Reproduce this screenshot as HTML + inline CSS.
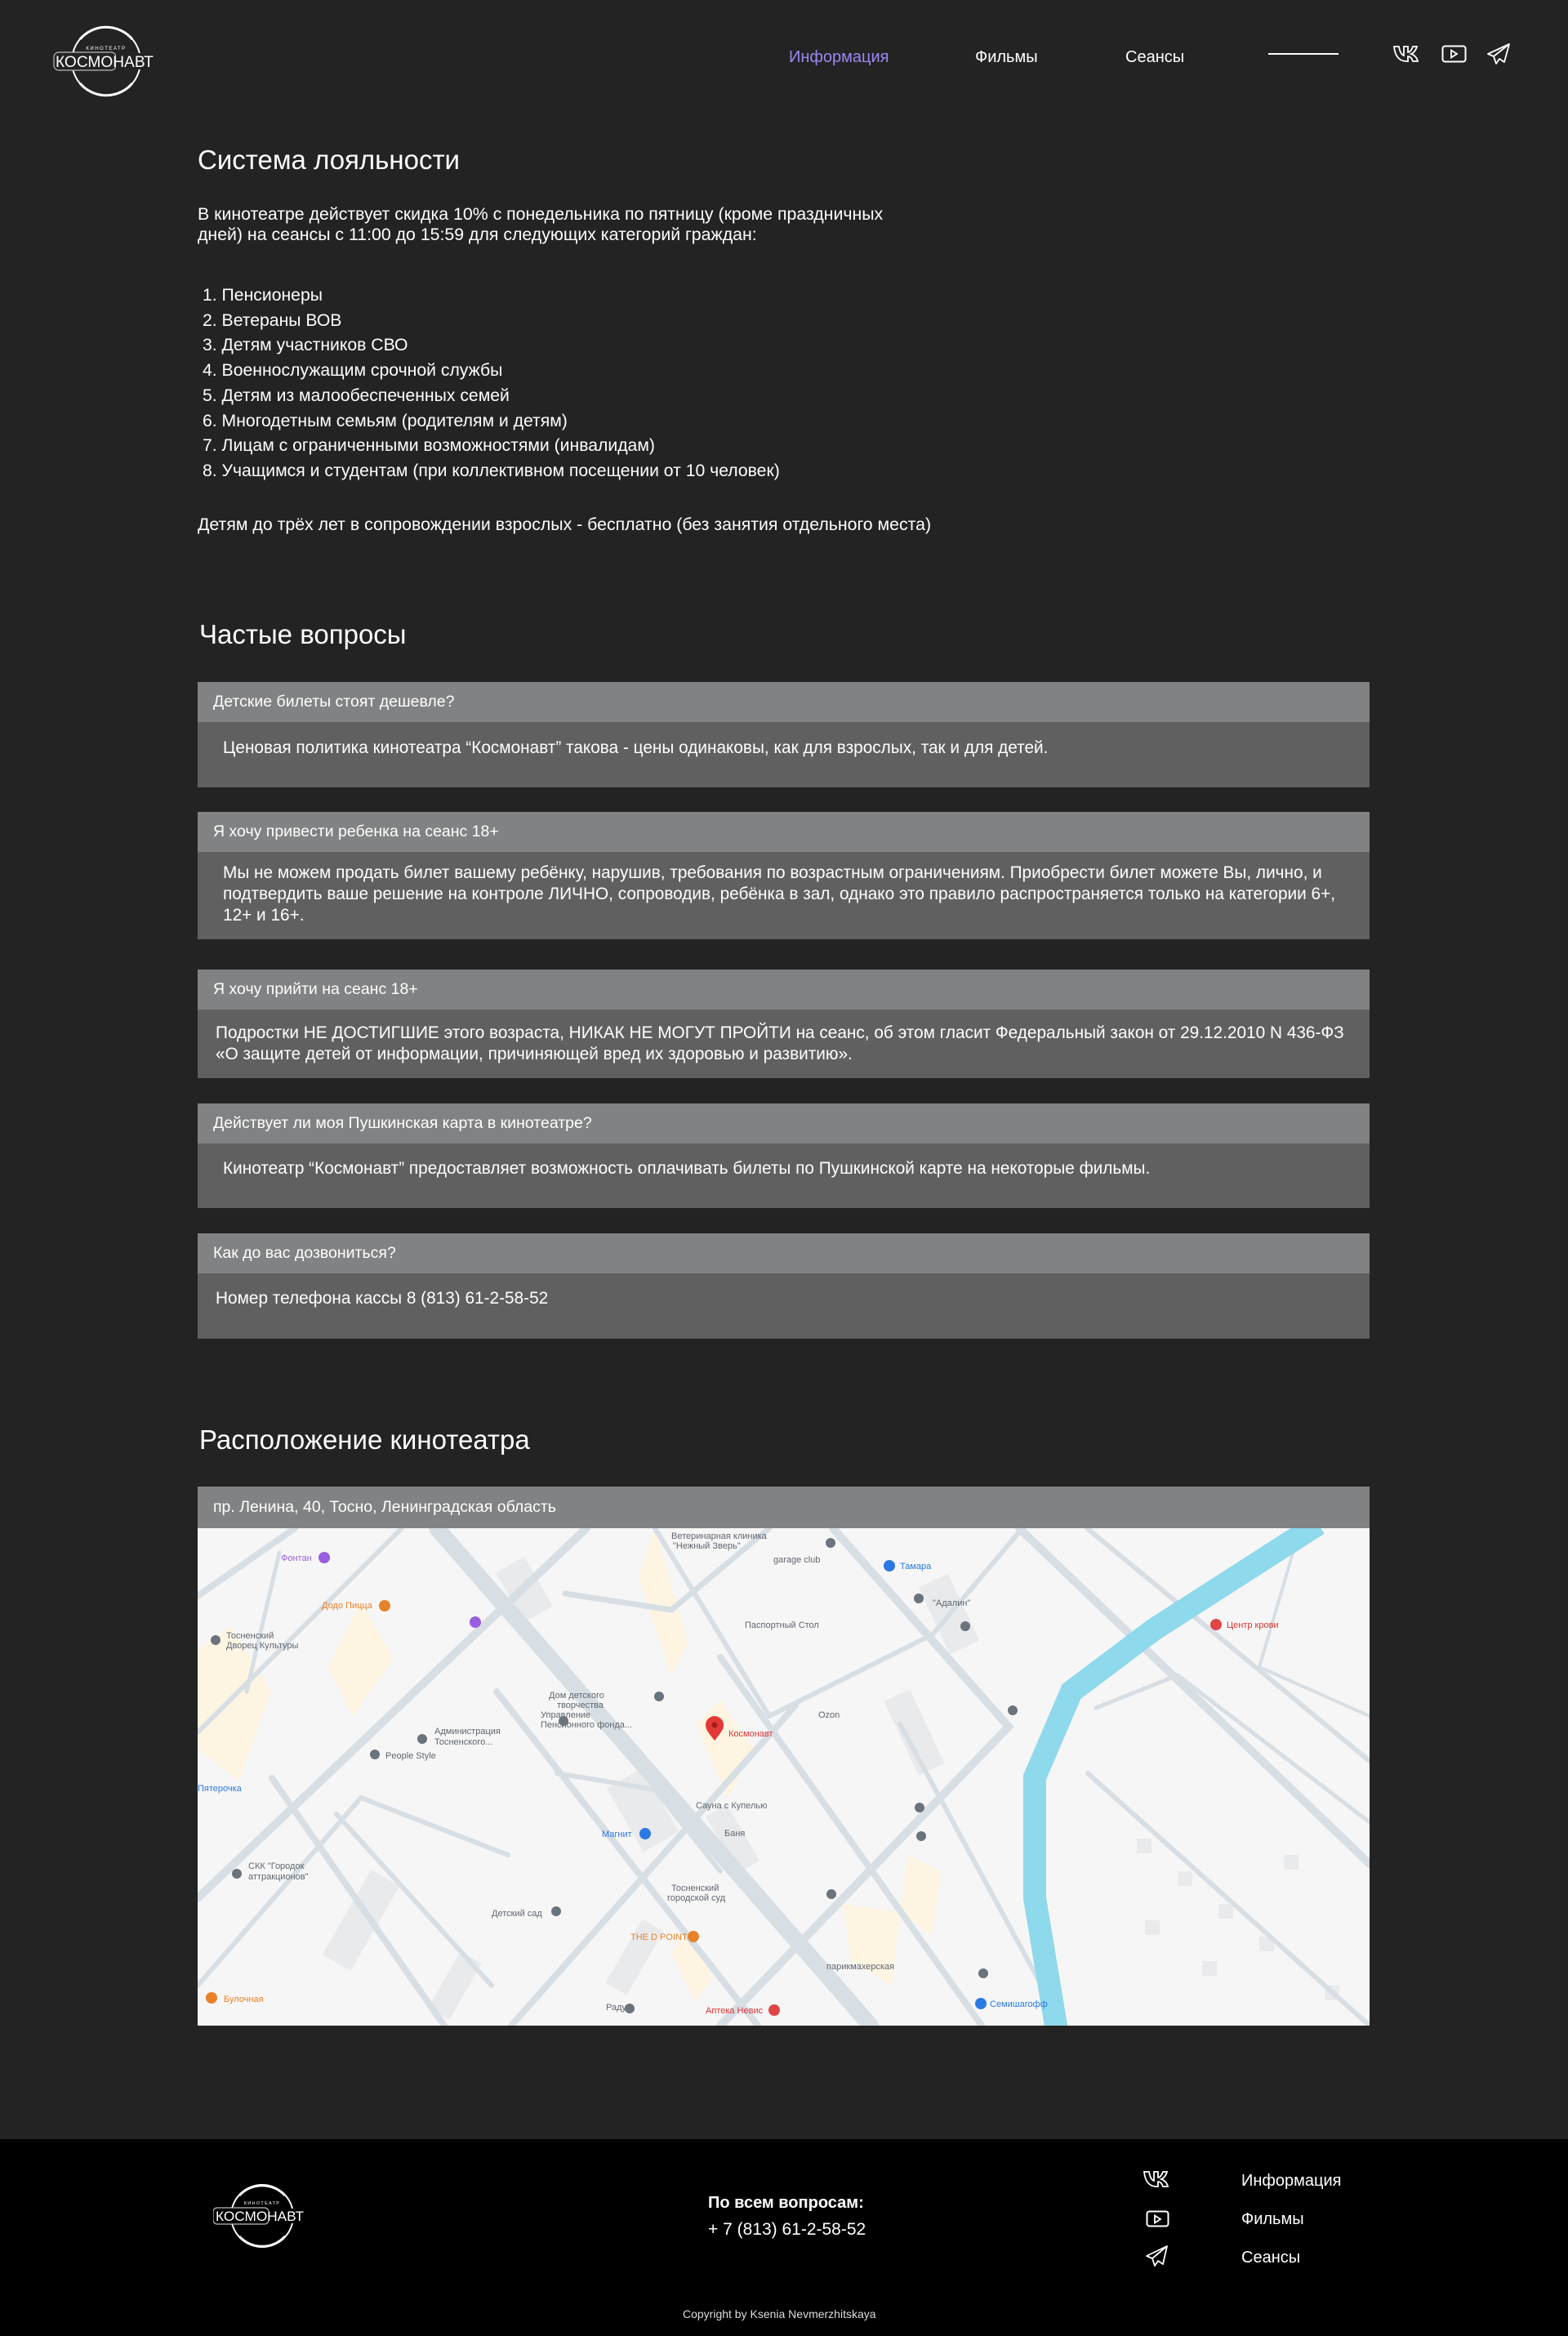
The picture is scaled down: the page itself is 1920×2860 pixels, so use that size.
<!DOCTYPE html>
<html><head><meta charset="utf-8">
<style>
*{margin:0;padding:0;box-sizing:border-box}
body{width:1920px;height:2860px;background:#232323;font-family:"Liberation Sans","DejaVu Sans",sans-serif;color:#fff;position:relative;overflow:hidden}
.a{position:absolute;white-space:nowrap}
.nav{font-size:20px;top:59px}
h2{position:absolute;font-weight:normal;font-size:33px;left:242px}
.p{font-size:21.3px;line-height:25px;left:242px}
.li{font-size:21.2px;left:248px;line-height:30.7px}
.box{position:absolute;left:242px;width:1435px;background:#606060}
.box .h{background:#818283;height:49px;font-size:19.5px;line-height:49px;padding-left:19px}
.box .b{font-size:20.8px;line-height:26px}
.foot{position:absolute;left:0;top:2619px;width:1920px;height:241px;background:#000}
</style></head><body>

<svg class="a" style="left:40px;top:20px" width="180" height="110" viewBox="0 0 180 110">
<circle cx="90" cy="55" r="42" fill="none" stroke="#fff" stroke-width="2"/>
<path d="M58 28 A42 42 0 0 1 122 28" fill="none" stroke="#fff" stroke-width="3"/>
<path d="M58 82 A42 42 0 0 0 122 82" fill="none" stroke="#fff" stroke-width="3"/>
<rect x="26" y="44" width="76" height="22" rx="6" fill="#232323" stroke="#bbb" stroke-width="1.2"/>
<rect x="102" y="45" width="48" height="20" fill="#232323"/>
<text x="90" y="41" font-size="6" fill="#fff" text-anchor="middle" letter-spacing="1.5" font-family="Liberation Sans">КИНОТЕАТР</text>
<text x="88" y="62" font-size="19" fill="#fff" text-anchor="middle" font-family="Liberation Sans" textLength="120" lengthAdjust="spacingAndGlyphs">КОСМОНАВТ</text>
</svg>

<div class="a nav" style="left:966px;color:#9d86f2">Информация</div>
<div class="a nav" style="left:1194px">Фильмы</div>
<div class="a nav" style="left:1378px">Сеансы</div>
<div class="a" style="left:1553px;top:65px;width:86px;height:2px;background:#fff"></div>

<svg class="a" style="left:1705px;top:55px" width="36" height="22" viewBox="0 0 36 22"><path d="M2 2h6c1 6 3 10 6 11V2h5v7c2 0 5-3 6-7h5c-1 4-4 8-7 9 3 1 7 4 8 9h-6c-1-3-3-6-6-6v6h-2C8 20 3 13 2 2z" fill="none" stroke="#fff" stroke-width="1.8"/></svg>
<svg class="a" style="left:1765px;top:55px" width="31" height="22" viewBox="0 0 31 22"><rect x="1.5" y="1.5" width="28" height="19" rx="3" fill="none" stroke="#fff" stroke-width="2"/><path d="M12 6.5v9l7-4.5z" fill="none" stroke="#fff" stroke-width="1.8"/></svg>
<svg class="a" style="left:1820px;top:52px" width="30" height="28" viewBox="0 0 30 28"><path d="M28 2L2 14l7 3 3 9 4-6 6 4zM9 17l19-15M12 26l4-6" fill="none" stroke="#fff" stroke-width="1.8" stroke-linejoin="round"/></svg>

<h2 style="top:177px">Система лояльности</h2>
<div class="a p" style="top:250px">В кинотеатре действует скидка 10% с понедельника по пятницу (кроме праздничных<br>дней) на сеансы с 11:00 до 15:59 для следующих категорий граждан:</div>
<div class="a li" style="top:347px">1. Пенсионеры<br>2. Ветераны ВОВ<br>3. Детям участников СВО<br>4. Военнослужащим срочной службы<br>5. Детям из малообеспеченных семей<br>6. Многодетным семьям (родителям и детям)<br>7. Лицам с ограниченными возможностями (инвалидам)<br>8. Учащимся и студентам (при коллективном посещении от 10 человек)</div>
<div class="a p" style="top:630px">Детям до трёх лет в сопровождении взрослых - бесплатно (без занятия отдельного места)</div>

<h2 style="top:758px;left:244px">Частые вопросы</h2>

<div class="box" style="top:835px;height:129px"><div class="h">Детские билеты стоят дешевле?</div><div class="b" style="padding:19px 0 0 31px">Ценовая политика кинотеатра “Космонавт” такова - цены одинаковы, как для взрослых, так и для детей.</div></div>
<div class="box" style="top:994px;height:156px"><div class="h">Я хочу привести ребенка на сеанс 18+</div><div class="b" style="padding:13px 0 0 31px">Мы не можем продать билет вашему ребёнку, нарушив, требования по возрастным ограничениям. Приобрести билет можете Вы, лично, и<br>подтвердить ваше решение на контроле ЛИЧНО, сопроводив, ребёнка в зал, однако это правило распространяется только на категории 6+,<br>12+ и 16+.</div></div>
<div class="box" style="top:1187px;height:133px"><div class="h">Я хочу прийти на сеанс 18+</div><div class="b" style="padding:16px 0 0 22px">Подростки НЕ ДОСТИГШИЕ этого возраста, НИКАК НЕ МОГУТ ПРОЙТИ на сеанс, об этом гласит Федеральный закон от 29.12.2010 N 436-ФЗ<br>«О защите детей от информации, причиняющей вред их здоровью и развитию».</div></div>
<div class="box" style="top:1351px;height:128px"><div class="h">Действует ли моя Пушкинская карта в кинотеатре?</div><div class="b" style="padding:18px 0 0 31px">Кинотеатр “Космонавт” предоставляет возможность оплачивать билеты по Пушкинской карте на некоторые фильмы.</div></div>
<div class="box" style="top:1510px;height:129px"><div class="h">Как до вас дозвониться?</div><div class="b" style="padding:18px 0 0 22px">Номер телефона кассы 8 (813) 61-2-58-52</div></div>

<h2 style="top:1744px;left:244px">Расположение кинотеатра</h2>
<div class="box" style="top:1820px;height:51px;background:#818283"><div class="h" style="height:51px;line-height:51px">пр. Ленина, 40, Тосно, Ленинградская область</div></div>

<svg class="a" style="left:242px;top:1871px" width="1435" height="609" viewBox="0 0 1435 609" font-family="Liberation Sans" font-size="11">
<rect width="1435" height="609" fill="#f7f6f6"/>
<g fill="#e9eaec">
<rect x="380" y="40" width="40" height="70" transform="rotate(-30 400 75)"/>
<rect x="520" y="300" width="50" height="90" transform="rotate(-30 545 345)"/>
<rect x="180" y="420" width="40" height="120" transform="rotate(30 200 480)"/>
<rect x="860" y="200" width="35" height="100" transform="rotate(-25 877 250)"/>
<rect x="900" y="60" width="40" height="90" transform="rotate(-25 920 105)"/>
<rect x="300" y="520" width="30" height="80" transform="rotate(30 315 560)"/>
<rect x="520" y="480" width="30" height="90" transform="rotate(30 535 525)"/>
<rect x="640" y="340" width="30" height="80" transform="rotate(-30 655 380)"/>
<rect x="1150" y="380" width="18" height="18"/><rect x="1200" y="420" width="18" height="18"/><rect x="1250" y="460" width="18" height="18"/><rect x="1300" y="500" width="18" height="18"/><rect x="1230" y="530" width="18" height="18"/><rect x="1330" y="400" width="18" height="18"/><rect x="1160" y="480" width="18" height="18"/><rect x="1380" y="560" width="18" height="18"/>
</g>
<g fill="#fdf5e2">
<path d="M200 90l40 70-50 70-30-60z"/>
<path d="M0 150l40-30 50 80-40 110-50-40z"/>
<path d="M560 0l40 140-20 40-40-120z"/>
<path d="M610 240l30-30 40 60-30 60z"/>
<path d="M790 460l70 10-10 90-50-30z"/>
<path d="M600 490l30 60-20 30-30-60z"/>
<path d="M870 400l40 20-10 80-40-30z"/>
</g>
<g fill="none" stroke="#d7dee4" stroke-linecap="round">
<path d="M293 0L824 609" stroke-width="20"/>
<path d="M778 0L993 243L750 495L640 609" stroke-width="10"/>
<path d="M1006 0L1435 411" stroke-width="10"/>
<path d="M1089 0L1435 285" stroke-width="6"/>
<path d="M476 0L0 453" stroke-width="10"/>
<path d="M91 306L302 609" stroke-width="8"/>
<path d="M0 83L119 0" stroke-width="8"/>
<path d="M732 217L384 609" stroke-width="8"/>
<path d="M366 200L686 609" stroke-width="8"/>
<path d="M640 158L960 609" stroke-width="8"/>
<path d="M450 80L580 100L700 0" stroke-width="7"/>
<path d="M0 250L250 0" stroke-width="6"/>
<path d="M170 350L360 560" stroke-width="6"/>
<path d="M0 560L200 330L380 400" stroke-width="6"/>
<path d="M560 0L700 230L900 130L1010 0" stroke-width="6"/>
<path d="M860 240L1060 609" stroke-width="6"/>
<path d="M1090 300L1435 609" stroke-width="6"/>
<path d="M1100 220L1200 180L1435 360" stroke-width="5"/>
<path d="M440 300L560 320L640 420" stroke-width="6"/>
<path d="M100 30L60 200" stroke-width="5"/>
<path d="M1350 0L1300 170L1435 230" stroke-width="4"/>
</g>
<path d="M1372 -5L1171 124L1070 200L1025 305L1025 453L1052 615" fill="none" stroke="#8fd9ec" stroke-width="28"/>
<g fill="#5e6670">
<text x="670" y="122">Паспортный Стол</text><text x="760" y="232">Ozon</text><text x="290" y="252">Администрация</text><text x="290" y="265">Тосненского...</text>
<text x="230" y="282">People Style</text><text x="430" y="208">Дом детского</text><text x="440" y="220">творчества</text>
<text x="420" y="232">Управление</text><text x="420" y="244">Пенсионного фонда...</text><text x="610" y="343">Сауна с Купелью</text>
<text x="645" y="377">Баня</text><text x="580" y="444">Тосненский</text><text x="575" y="456">городской суд</text>
<text x="360" y="475">Детский сад</text><text x="770" y="540">парикмахерская</text><text x="500" y="590">Радуга</text>
<text x="35" y="135">Тосненский</text><text x="35" y="147">Дворец Культуры</text><text x="62" y="417">СКК "Городок</text><text x="62" y="430">аттракционов"</text>
<text x="580" y="13">Ветеринарная клиника</text><text x="582" y="25">"Нежный Зверь"</text><text x="705" y="42">garage club</text><text x="900" y="95">"Адалин"</text>
</g>
<g fill="#e8822a"><text x="152" y="98">Додо Пицца</text><text x="530" y="504">THE D POINT</text><text x="32" y="580">Булочная</text></g>
<g fill="#2a7ae2"><text x="0" y="322">Пятерочка</text><text x="495" y="378">Магнит</text><text x="860" y="50">Тамара</text><text x="970" y="586">Семишагофф</text></g>
<g fill="#d33"><text x="650" y="255">Космонавт</text><text x="1260" y="122">Центр крови</text><text x="622" y="594">Аптека Невис</text></g>
<text x="102" y="40" fill="#9a5ee0">Фонтан</text>
<path d="M633 260c-8-10-11-14-11-19a11 11 0 0 1 22 0c0 5-3 9-11 19z" fill="#e53935"/><circle cx="633" cy="241" r="3.5" fill="#a01e1e"/>
<g fill="#6b737c"><circle cx="22" cy="137" r="6"/><circle cx="275" cy="258" r="6"/><circle cx="217" cy="277" r="6"/><circle cx="565" cy="206" r="6"/><circle cx="448" cy="236" r="6"/><circle cx="775" cy="18" r="6"/><circle cx="883" cy="86" r="6"/><circle cx="940" cy="120" r="6"/><circle cx="998" cy="223" r="6"/><circle cx="884" cy="342" r="6"/><circle cx="886" cy="377" r="6"/><circle cx="776" cy="448" r="6"/><circle cx="439" cy="469" r="6"/><circle cx="962" cy="545" r="6"/><circle cx="529" cy="588" r="6"/><circle cx="48" cy="423" r="6"/></g>
<circle cx="229" cy="95" r="7" fill="#e8822a"/><circle cx="607" cy="500" r="7" fill="#e8822a"/><circle cx="17" cy="575" r="7" fill="#e8822a"/>
<circle cx="548" cy="374" r="7" fill="#2a7ae2"/><circle cx="847" cy="46" r="7" fill="#2a7ae2"/><circle cx="959" cy="582" r="7" fill="#2a7ae2"/>
<circle cx="1247" cy="118" r="7" fill="#e04545"/><circle cx="706" cy="590" r="7" fill="#e04545"/><circle cx="155" cy="36" r="7" fill="#9a5ee0"/><circle cx="340" cy="115" r="7" fill="#9a5ee0"/>
</svg>

<div class="foot"></div>
<svg class="a" style="left:261px;top:2664px" width="120" height="100" viewBox="0 0 120 100">
<circle cx="60" cy="49" r="38" fill="none" stroke="#fff" stroke-width="2"/>
<path d="M32 24A38 38 0 0 1 88 24" fill="none" stroke="#fff" stroke-width="3"/>
<path d="M32 74A38 38 0 0 0 88 74" fill="none" stroke="#fff" stroke-width="3"/>
<rect x="0" y="39" width="68" height="20" rx="5" fill="#000" stroke="#bbb" stroke-width="1.2"/>
<rect x="68" y="40" width="44" height="18" fill="#000"/>
<text x="60" y="35" font-size="5.5" fill="#fff" text-anchor="middle" letter-spacing="1.3" font-family="Liberation Sans">КИНОТЕАТР</text>
<text x="57" y="55" font-size="17" fill="#fff" text-anchor="middle" font-family="Liberation Sans" textLength="108" lengthAdjust="spacingAndGlyphs">КОСМОНАВТ</text>
</svg>
<div class="a" style="left:867px;top:2686px;font-size:20px;font-weight:bold">По всем вопросам:</div>
<div class="a" style="left:867px;top:2718px;font-size:21px">+ 7 (813) 61-2-58-52</div>
<div class="a" style="left:836px;top:2825px;font-size:14px;color:#ddd">Copyright by Ksenia Nevmerzhitskaya</div>
<svg class="a" style="left:1399px;top:2657px" width="36" height="22" viewBox="0 0 36 22"><path d="M2 2h6c1 6 3 10 6 11V2h5v7c2 0 5-3 6-7h5c-1 4-4 8-7 9 3 1 7 4 8 9h-6c-1-3-3-6-6-6v6h-2C8 20 3 13 2 2z" fill="none" stroke="#fff" stroke-width="1.8"/></svg>
<svg class="a" style="left:1403px;top:2706px" width="31" height="22" viewBox="0 0 31 22"><rect x="1.5" y="1.5" width="26" height="18" rx="3" fill="none" stroke="#fff" stroke-width="2"/><path d="M11 6.5v9l7-4.5z" fill="none" stroke="#fff" stroke-width="1.8"/></svg>
<svg class="a" style="left:1402px;top:2748px" width="30" height="28" viewBox="0 0 30 28"><path d="M27 2L2 14l7 3 3 9 4-6 6 4zM9 17l18-15M12 26l4-6" fill="none" stroke="#fff" stroke-width="1.8" stroke-linejoin="round"/></svg>
<div class="a" style="left:1520px;top:2659px;font-size:20px">Информация</div>
<div class="a" style="left:1520px;top:2706px;font-size:20px">Фильмы</div>
<div class="a" style="left:1520px;top:2753px;font-size:20px">Сеансы</div>
</body></html>
